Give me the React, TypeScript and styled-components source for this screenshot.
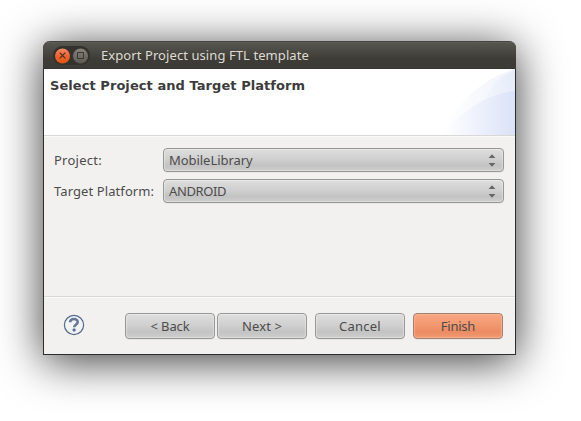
import React from "react";
import styled, { createGlobalStyle, css } from "styled-components";

const GlobalStyle = createGlobalStyle`
  * { box-sizing: border-box; }
  body { margin: 0; background: #fff; overflow: hidden; }
`;

const Desktop = styled.main`
  width: 581px;
  height: 421px;
  padding: 41px 65px 66px 43px;
  background: #fff;
  font: 13px/18px "Noto Sans", sans-serif;
  color: #4c4c4c;
`;

const Dialog = styled.section`
  display: flex;
  flex-direction: column;
  width: 473px;
  height: 314px;
  border: 1px solid #2b2c2e;
  border-top: 0;
  border-radius: 7px 7px 0 0;
  background: #f2f1ef;
  box-shadow: 0 6px 45px rgba(0, 0, 0, 0.78);
`;

const TitleBar = styled.header`
  display: flex;
  align-items: center;
  height: 28px;
  margin: 0 -1px;
  padding: 1px 0 0 10px;
  border-radius: 7px 7px 0 0;
  background: linear-gradient(#45443e 0, #45443e 1px, #65645b 1px, #56554e 2px, #3d3c37 18px, #3c3b37 27px, #32312d 28px);
  color: #dfdbd2;
`;

const WindowControls = styled.div`
  display: flex;
  align-items: center;
  gap: 3px;
  width: 37px;
  height: 19px;
  padding-left: 2px;
  border-radius: 9px;
  background: #33322e;
`;

const Text = styled.span<{ $track?: number }>`
  white-space: nowrap;
  letter-spacing: ${({ $track = 0 }) => $track}px;
`;

const WindowTitle = styled(Text)`
  margin: 0 0 1px 11px;
`;

const Banner = styled.div`
  display: flex;
  justify-content: space-between;
  height: 67px;
  border-bottom: 1px solid #d9d8d6;
  background: #fff;
`;

const Heading = styled.h1`
  margin: 8px 0 0 6px;
  color: #3c3c3c;
  font: bold 13px/18px "DejaVu Sans", sans-serif;
  letter-spacing: 0.06px;
  white-space: nowrap;
`;

const Form = styled.div`
  display: grid;
  grid-template-columns: 109px 341px;
  grid-auto-rows: 24px;
  row-gap: 7px;
  align-items: center;
  align-content: start;
  height: 161px;
  padding: 12px 0 0 10px;
  border-bottom: 1px solid #d9d8d6;
  box-shadow: inset 0 1px #fafaf9;
`;

const control = css`
  display: flex;
  align-items: center;
  margin: 0;
  border: 1px solid #969896;
  border-radius: 4px;
  background: linear-gradient(#dedede, #d0d0d0 45%, #c3c3c3 75%, #cecece);
  box-shadow: inset 0 0 1px 1px rgba(255, 255, 255, 0.35), 0 1px #e8e7e5;
  color: #4c4c4c;
  font: inherit;
`;

const Select = styled.button`
  ${control}
  justify-content: space-between;
  height: 24px;
  padding: 0 7px 0 5px;
`;

const Footer = styled.footer`
  display: flex;
  flex: 1;
  align-items: flex-start;
  padding: 16px 11px 0 19px;
  box-shadow: inset 0 1px #fafaf9;
`;

const HelpButton = styled.button`
  display: flex;
  margin: 1px 40px 0 0;
  padding: 0;
  border: 0;
  background: none;
`;

const Button = styled.button<{ $primary?: boolean; $gap?: number }>`
  ${control}
  justify-content: center;
  width: 90px;
  height: 26px;
  margin-left: ${({ $gap = 0 }) => $gap}px;
  padding: 0 0 1px;
  ${({ $primary }) =>
    $primary &&
    css`
      border-color: #a08070;
      background: linear-gradient(#f9a683, #f2986f 45%, #ec8b62 75%, #f09a74);
      box-shadow: inset 0 0 1px 1px rgba(255, 190, 155, 0.6), 0 1px #e8e7e5;
    `}
`;

const CloseIcon = () => (
  <svg width="15" height="16" viewBox="0 0 15 16">
    <defs>
      <linearGradient id="close" x2="0" y2="1">
        <stop stopColor="#f68a63" />
        <stop offset=".5" stopColor="#ed6232" />
        <stop offset="1" stopColor="#e2560f" />
      </linearGradient>
    </defs>
    <circle cx="7.5" cy="8" r="7.5" fill="url(#close)" />
    <path d="M4.7 4.7l5.6 5.6M10.3 4.7l-5.6 5.6" stroke="#4d2c1e" strokeWidth="1.2" />
  </svg>
);

const MaximizeIcon = () => (
  <svg width="15" height="16" viewBox="0 0 15 16">
    <defs>
      <linearGradient id="maximize" x2="0" y2="1">
        <stop stopColor="#85837b" />
        <stop offset="1" stopColor="#5b5a53" />
      </linearGradient>
    </defs>
    <circle cx="7.5" cy="8" r="7.5" fill="url(#maximize)" />
    <path d="M4.5 4.5h6v6h-6z" fill="none" stroke="#383731" />
  </svg>
);

const Swoosh = () => (
  <svg width="78" height="66" viewBox="0 0 78 66">
    <defs>
      <linearGradient id="sweep" x2="1">
        <stop stopColor="#fff" />
        <stop offset=".4" stopColor="#f9fafe" />
        <stop offset="1" stopColor="#eff3fb" />
      </linearGradient>
      <linearGradient id="inner" x2="1">
        <stop stopColor="#f8faff" />
        <stop offset="1" stopColor="#e5ebf9" />
      </linearGradient>
      <linearGradient id="wave" x2="1">
        <stop stopColor="#fff" />
        <stop offset=".4" stopColor="#f1f4fd" />
        <stop offset="1" stopColor="#dae2f6" />
      </linearGradient>
    </defs>
    <path d="M6 66Q28 15 78 0V66Z" fill="url(#sweep)" />
    <path d="M35 66Q47 12 78 1V66Z" fill="url(#inner)" />
    <path d="M6 66Q36 27 78 22V66Z" fill="url(#wave)" />
  </svg>
);

const StepperArrows = () => (
  <svg width="8" height="14" viewBox="0 0 8 14" fill="#666">
    <path d="M.6 5L4 1.2 7.4 5zM.6 10L4 13.8 7.4 10z" />
  </svg>
);

const HelpIcon = () => (
  <svg width="22" height="22" viewBox="0 0 22 22">
    <circle cx="11" cy="11" r="9.6" fill="#f3f3f4" stroke="#526a8e" strokeWidth="1.2" />
    <path d="M7.1 8.2C7.3 3.9 14.7 3.9 14.7 8c0 2.6-3.5 2.8-3.5 5.2" fill="none" stroke="#637899" strokeWidth="2.6" />
    <rect x="9.6" y="14.6" width="3" height="3" rx="1" fill="#566e92" />
  </svg>
);

const fields = [
  { label: "Project:", value: "MobileLibrary", labelTrack: 0.25, valueTrack: -0.05 },
  { label: "Target Platform:", value: "ANDROID", labelTrack: 0.09, valueTrack: -0.4 },
];

export default function App() {
  return (
    <>
      <GlobalStyle />
      <Desktop>
        <Dialog>
          <TitleBar>
            <WindowControls>
              <CloseIcon />
              <MaximizeIcon />
            </WindowControls>
            <WindowTitle $track={0.08}>Export Project using FTL template</WindowTitle>
          </TitleBar>
          <Banner>
            <Heading>Select Project and Target Platform</Heading>
            <Swoosh />
          </Banner>
          <Form>
            {fields.map((f) => (
              <React.Fragment key={f.label}>
                <Text $track={f.labelTrack}>{f.label}</Text>
                <Select>
                  <Text $track={f.valueTrack}>{f.value}</Text>
                  <StepperArrows />
                </Select>
              </React.Fragment>
            ))}
          </Form>
          <Footer>
            <HelpButton aria-label="Help">
              <HelpIcon />
            </HelpButton>
            <Button><Text $track={-0.15}>&lt; Back</Text></Button>
            <Button $gap={2}><Text $track={0.15}>Next &gt;</Text></Button>
            <Button $gap={8}><Text $track={0.25}>Cancel</Text></Button>
            <Button $gap={8} $primary><Text $track={-0.25}>Finish</Text></Button>
          </Footer>
        </Dialog>
      </Desktop>
    </>
  );
}
